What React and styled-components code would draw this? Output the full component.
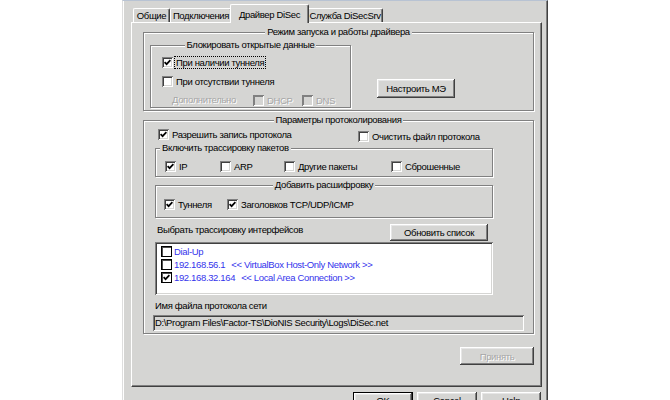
import React from "react";
import styled, { createGlobalStyle, css } from "styled-components";

const FACE = "#d5d5d3";
const SHADOW = "#808080";
const DARK = "#404040";
const BLUE = "#3434ec";

const Global = createGlobalStyle`
  html, body { margin: 0; padding: 0; background: #fff; }
  body {
    font-family: "Liberation Sans", Arial, sans-serif;
    font-size: 9.5px;
    letter-spacing: -0.35px;
    color: #000;
  }
  * { box-sizing: border-box; }
`;

const Screen = styled.div`
  width: 670px;
  height: 400px;
  overflow: hidden;
  background: #fff;
  padding-left: 122px;
`;

const Dialog = styled.div`
  width: 426px;
  height: 420px;
  background: ${FACE};
  border-top: 1px solid #b8c3d3;
  border-left: 1px solid #dedede;
  border-right: 1px solid ${DARK};
  box-shadow: inset 1px 0 0 #fff, inset -1px 0 0 ${SHADOW};
  padding: 3px 5px 0 8px;
  display: flex;
  flex-direction: column;
`;

const TabStrip = styled.div`
  display: flex;
  align-items: flex-end;
  height: 18px;
  padding-left: 2px;
`;

const Tab = styled.div`
  position: relative;
  z-index: ${(p) => (p.$active ? 2 : 1)};
  flex: none;
  width: ${(p) => p.$w}px;
  height: ${(p) => (p.$active ? 19 : 14)}px;
  margin: 0 ${(p) => (p.$active ? -2 : 0)}px ${(p) => (p.$active ? -1 : 0)}px;
  padding-top: ${(p) => (p.$active ? 4 : 1)}px;
  background: ${FACE};
  border: 1px solid #fff;
  border-bottom: none;
  border-right-color: ${DARK};
  border-radius: 2px 2px 0 0;
  box-shadow: inset -1px 0 0 ${SHADOW};
  text-align: center;
  line-height: 12px;
  white-space: nowrap;
`;

const TabPage = styled.div`
  flex: none;
  height: 365px;
  border-top: 1px solid #fff;
  border-left: 1px solid #fff;
  border-right: 1px solid ${DARK};
  border-bottom: 1px solid ${DARK};
  box-shadow: inset -1px -1px 0 ${SHADOW};
  padding: 9px 7px 0 11px;
  display: flex;
  flex-direction: column;
`;

const Group = styled.div`
  flex: none;
  display: flex;
  flex-direction: column;
  align-self: stretch;
  width: ${(p) => (p.$w ? `${p.$w}px` : "auto")};
  margin-top: ${(p) => p.$mt || 0}px;
  border: 1px solid ${SHADOW};
  box-shadow: 1px 1px 0 #fff, inset 1px 1px 0 #fff;
`;

const Legend = styled.div`
  align-self: ${(p) => (p.$left !== undefined ? "flex-start" : "center")};
  margin-top: -7px;
  margin-left: ${(p) => p.$left || 0}px;
  padding: 0 2px;
  line-height: 12px;
  background: ${FACE};
  white-space: nowrap;
`;

const GroupBody = styled.div`
  display: flex;
  flex-direction: ${(p) => (p.$column ? "column" : "row")};
  align-items: flex-start;
  gap: ${(p) => p.$gap || 0}px;
  padding: ${(p) => p.$pad};
`;

const Column = styled.div`
  width: 338px;
  margin-left: 2px;
  display: flex;
  flex-direction: column;
`;

const Row = styled.div`
  display: flex;
  align-items: flex-start;
  align-self: stretch;
  margin-top: ${(p) => p.$mt || 0}px;
  padding-left: ${(p) => p.$pl || 0}px;
`;

const Item = styled.div`
  flex: none;
  display: flex;
  align-items: center;
  height: 13px;
  width: ${(p) => (p.$w ? `${p.$w}px` : "auto")};
  margin-top: ${(p) => p.$mt || 0}px;
  white-space: nowrap;
`;

const Box = styled.span`
  flex: none;
  width: 11px;
  height: 11px;
  display: flex;
  align-items: center;
  justify-content: center;
  background: ${(p) => (p.$disabled ? FACE : "#fff")};
  ${(p) =>
    p.$flat
      ? css`
          border: 1px solid #000;
          box-shadow: inset 1px 1px 0 #505050;
        `
      : css`
          box-shadow: inset 1px 1px 0 ${SHADOW}, inset -1px -1px 0 #fff,
            inset 2px 2px 0 ${p.$disabled ? SHADOW : DARK},
            inset -2px -2px 0 ${FACE};
        `}
`;

const Caption = styled.span`
  margin-left: 1px;
  padding: 0 1px;
  line-height: 11px;
  border: 1px dotted ${(p) => (p.$focused ? "#000" : "transparent")};
  color: ${(p) => (p.$disabled ? "#a6a6a6" : "#000")};
  text-shadow: ${(p) => (p.$disabled ? "1px 1px 0 #fff" : "none")};
`;

const Plain = styled.span`
  flex: none;
  display: block;
  line-height: 12px;
  width: ${(p) => (p.$w ? `${p.$w}px` : "auto")};
  margin-left: ${(p) => p.$ml || 0}px;
  margin-top: ${(p) => p.$mt || 0}px;
  color: ${(p) => (p.$disabled ? "#a6a6a6" : "#000")};
  text-shadow: ${(p) => (p.$disabled ? "1px 1px 0 #fff" : "none")};
  white-space: nowrap;
`;

const Button = styled.button`
  flex: none;
  width: ${(p) => p.$w}px;
  height: ${(p) => p.$h}px;
  margin: ${(p) => p.$m || "0"};
  padding: 0;
  font: inherit;
  letter-spacing: inherit;
  display: flex;
  align-items: center;
  justify-content: center;
  background: ${FACE};
  color: ${(p) => (p.disabled ? "#a6a6a6" : "#000")};
  text-shadow: ${(p) => (p.disabled ? "1px 1px 0 #fff" : "none")};
  border: ${(p) => (p.$default ? "1px solid #000" : "none")};
  box-shadow: inset -1px -1px 0 ${DARK}, inset 1px 1px 0 #fff,
    inset -2px -2px 0 ${SHADOW}, inset 2px 2px 0 #e6e6e6;
  white-space: nowrap;
`;

const ListBox = styled.div`
  height: 53px;
  margin-top: 1px;
  background: #fff;
  box-shadow: inset 1px 1px 0 ${SHADOW}, inset -1px -1px 0 #fff,
    inset 2px 2px 0 ${DARK}, inset -2px -2px 0 ${FACE};
  padding: 3px 0 0 6px;
  display: flex;
  flex-direction: column;
`;

const ListRow = styled.div`
  display: flex;
  align-items: center;
  height: 13px;
  color: ${BLUE};
  white-space: nowrap;
`;

const ListText = styled.span`
  margin-left: 2px;
  line-height: 11px;
`;

const Alias = styled.span`
  margin-left: 6px;
`;

const Field = styled.div`
  align-self: stretch;
  height: 16px;
  margin-top: 3px;
  background: ${FACE};
  box-shadow: inset 1px 1px 0 ${SHADOW}, inset -1px -1px 0 #fff,
    inset 2px 2px 0 ${DARK}, inset -2px -2px 0 ${FACE};
  padding-left: 2px;
  line-height: 16px;
  white-space: nowrap;
  overflow: hidden;
`;

const BottomRow = styled.div`
  display: flex;
  justify-content: flex-end;
  gap: 4px;
  margin-top: 5px;
  padding-right: 1px;
`;

function CheckMark() {
  return (
    <svg width="7" height="7" viewBox="0 0 7 7">
      <path d="M0.6 3.2 L2.6 5.2 L6.4 1.2" stroke="#000" strokeWidth="1.7" fill="none" />
    </svg>
  );
}

function Check({ checked, disabled, flat }) {
  return (
    <Box $disabled={disabled} $flat={flat}>
      {checked && <CheckMark />}
    </Box>
  );
}

function CheckItem({ label, checked, disabled, focused, w, mt }) {
  return (
    <Item $w={w} $mt={mt}>
      <Check checked={checked} disabled={disabled} />
      <Caption $disabled={disabled} $focused={focused}>
        {label}
      </Caption>
    </Item>
  );
}

const tabs = [
  { label: "Общие", w: 37 },
  { label: "Подключения", w: 62 },
  { label: "Драйвер DiSec", w: 79, active: true },
  { label: "Служба DiSecSrv", w: 76 },
];

const interfaces = [
  { ip: "Dial-Up", checked: false },
  { ip: "192.168.56.1", alias: "<< VirtualBox Host-Only Network >>", checked: false },
  { ip: "192.168.32.164", alias: "<< Local Area Connection >>", checked: true },
];

export default function App() {
  return (
    <>
      <Global />
      <Screen>
        <Dialog>
          <TabStrip>
            {tabs.map((t) => (
              <Tab key={t.label} $w={t.w} $active={t.active}>
                {t.label}
              </Tab>
            ))}
          </TabStrip>
          <TabPage>
            <Group>
              <Legend>Режим запуска и работы драйвера</Legend>
              <GroupBody $pad="7px 6px 2px 6px">
                <Group $w={201}>
                  <Legend>Блокировать открытые данные</Legend>
                  <GroupBody $column $gap={6} $pad="5px 0 0 11px">
                    <CheckItem label="При наличии туннеля" checked focused />
                    <CheckItem label="При отсутствии туннеля" />
                    <Row>
                      <Plain $disabled $w={81} $ml={10}>
                        Дополнительно
                      </Plain>
                      <CheckItem label="DHCP" disabled w={49} />
                      <CheckItem label="DNS" disabled />
                    </Row>
                  </GroupBody>
                </Group>
                <Button $w={78} $h={19} $m="34px 0 0 26px">
                  Настроить МЭ
                </Button>
              </GroupBody>
            </Group>

            <Group $mt={9}>
              <Legend>Параметры протоколирования</Legend>
              <GroupBody $column $pad="0 9px 2px 9px">
                <Column>
                  <Row $mt={2} $pl={3}>
                    <CheckItem label="Разрешить запись протокола" checked w={200} />
                    <CheckItem label="Очистить файл протокола" mt={2} />
                  </Row>
                  <Group $mt={5}>
                    <Legend $left={4}>Включить трассировку пакетов</Legend>
                    <GroupBody $pad="6px 0 3px 9px">
                      <CheckItem label="IP" checked w={55} />
                      <CheckItem label="ARP" w={64} />
                      <CheckItem label="Другие пакеты" w={107} />
                      <CheckItem label="Сброшенные" />
                    </GroupBody>
                  </Group>
                  <Group $mt={8}>
                    <Legend>Добавить расшифровку</Legend>
                    <GroupBody $pad="7px 0 6px 8px">
                      <CheckItem label="Туннеля" checked w={63} />
                      <CheckItem label="Заголовков TCP/UDP/ICMP" checked />
                    </GroupBody>
                  </Group>
                  <Row $mt={6}>
                    <Plain $ml={2}>Выбрать трассировку интерфейсов</Plain>
                    <Button $w={98} $h={17} $m="0 5px 0 auto">
                      Обновить список
                    </Button>
                  </Row>
                  <ListBox>
                    {interfaces.map((it) => (
                      <ListRow key={it.ip}>
                        <Check checked={it.checked} flat />
                        <ListText>
                          {it.ip}
                          {it.alias && <Alias>{it.alias}</Alias>}
                        </ListText>
                      </ListRow>
                    ))}
                  </ListBox>
                </Column>
                <Plain $ml={2} $mt={5}>
                  Имя файла протокола сети
                </Plain>
                <Field>D:\Program Files\Factor-TS\DioNIS Security\Logs\DiSec.net</Field>
              </GroupBody>
            </Group>

            <Button $w={74} $h={18} $m="13px 0 0 auto" disabled>
              Принять
            </Button>
          </TabPage>
          <BottomRow>
            <Button $w={60} $h={16} $default>
              OK
            </Button>
            <Button $w={60} $h={16}>
              Cancel
            </Button>
            <Button $w={60} $h={16}>
              Help
            </Button>
          </BottomRow>
        </Dialog>
      </Screen>
    </>
  );
}
